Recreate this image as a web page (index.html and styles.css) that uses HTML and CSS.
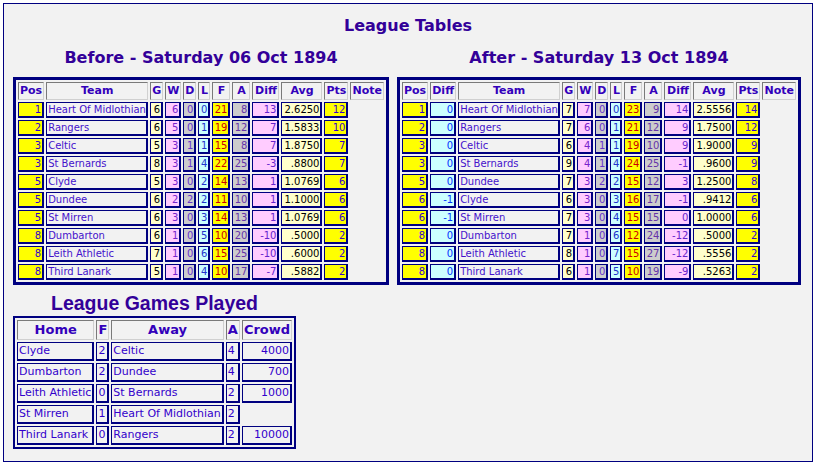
FILE: index.html
```html
<!DOCTYPE html>
<html>
<head>
<meta charset="utf-8">
<title>League Tables</title>
<link rel="stylesheet" href="styles.css">
</head>
<body>
<div class="page">
  <div class="title">League Tables</div>
  <div class="tables">
    <div class="col">
      <div class="subtitle">Before - Saturday 06 Oct 1894</div>
      <table class="league">
        <tr>
          <th class="w-pos">Pos</th><th class="w-team">Team</th><th class="w-g">G</th><th class="w-w">W</th><th class="w-d">D</th><th class="w-l">L</th><th class="w-f">F</th><th class="w-a">A</th><th class="w-diff">Diff</th><th class="w-avg">Avg</th><th class="w-pts">Pts</th><th class="w-note">Note</th>
        </tr>
        <tr><td class="pos">1</td><td class="team">Heart Of Midlothian</td><td class="g">6</td><td class="w">6</td><td class="d">0</td><td class="l">0</td><td class="f">21</td><td class="a">8</td><td class="diff">13</td><td class="avg">2.6250</td><td class="pts">12</td><td class="note"></td></tr>
        <tr><td class="pos">2</td><td class="team">Rangers</td><td class="g">6</td><td class="w">5</td><td class="d">0</td><td class="l">1</td><td class="f">19</td><td class="a">12</td><td class="diff">7</td><td class="avg">1.5833</td><td class="pts">10</td><td class="note"></td></tr>
        <tr><td class="pos">3</td><td class="team">Celtic</td><td class="g">5</td><td class="w">3</td><td class="d">1</td><td class="l">1</td><td class="f">15</td><td class="a">8</td><td class="diff">7</td><td class="avg">1.8750</td><td class="pts">7</td><td class="note"></td></tr>
        <tr><td class="pos">3</td><td class="team">St Bernards</td><td class="g">8</td><td class="w">3</td><td class="d">1</td><td class="l">4</td><td class="f">22</td><td class="a">25</td><td class="diff">-3</td><td class="avg">.8800</td><td class="pts">7</td><td class="note"></td></tr>
        <tr><td class="pos">5</td><td class="team">Clyde</td><td class="g">5</td><td class="w">3</td><td class="d">0</td><td class="l">2</td><td class="f">14</td><td class="a">13</td><td class="diff">1</td><td class="avg">1.0769</td><td class="pts">6</td><td class="note"></td></tr>
        <tr><td class="pos">5</td><td class="team">Dundee</td><td class="g">6</td><td class="w">2</td><td class="d">2</td><td class="l">2</td><td class="f">11</td><td class="a">10</td><td class="diff">1</td><td class="avg">1.1000</td><td class="pts">6</td><td class="note"></td></tr>
        <tr><td class="pos">5</td><td class="team">St Mirren</td><td class="g">6</td><td class="w">3</td><td class="d">0</td><td class="l">3</td><td class="f">14</td><td class="a">13</td><td class="diff">1</td><td class="avg">1.0769</td><td class="pts">6</td><td class="note"></td></tr>
        <tr><td class="pos">8</td><td class="team">Dumbarton</td><td class="g">6</td><td class="w">1</td><td class="d">0</td><td class="l">5</td><td class="f">10</td><td class="a">20</td><td class="diff">-10</td><td class="avg">.5000</td><td class="pts">2</td><td class="note"></td></tr>
        <tr><td class="pos">8</td><td class="team">Leith Athletic</td><td class="g">7</td><td class="w">1</td><td class="d">0</td><td class="l">6</td><td class="f">15</td><td class="a">25</td><td class="diff">-10</td><td class="avg">.6000</td><td class="pts">2</td><td class="note"></td></tr>
        <tr><td class="pos">8</td><td class="team">Third Lanark</td><td class="g">5</td><td class="w">1</td><td class="d">0</td><td class="l">4</td><td class="f">10</td><td class="a">17</td><td class="diff">-7</td><td class="avg">.5882</td><td class="pts">2</td><td class="note"></td></tr>
      </table>
    </div>
    <div class="col">
      <div class="subtitle">After - Saturday 13 Oct 1894</div>
      <table class="league">
        <tr>
          <th class="w-pos">Pos</th><th class="w-pdiff">Diff</th><th class="w-team">Team</th><th class="w-g">G</th><th class="w-w">W</th><th class="w-d">D</th><th class="w-l">L</th><th class="w-f">F</th><th class="w-a">A</th><th class="w-diff">Diff</th><th class="w-avg">Avg</th><th class="w-pts">Pts</th><th class="w-note">Note</th>
        </tr>
        <tr><td class="pos">1</td><td class="pdiff">0</td><td class="team">Heart Of Midlothian</td><td class="g">7</td><td class="w">7</td><td class="d">0</td><td class="l">0</td><td class="f">23</td><td class="a">9</td><td class="diff">14</td><td class="avg">2.5556</td><td class="pts">14</td><td class="note"></td></tr>
        <tr><td class="pos">2</td><td class="pdiff">0</td><td class="team">Rangers</td><td class="g">7</td><td class="w">6</td><td class="d">0</td><td class="l">1</td><td class="f">21</td><td class="a">12</td><td class="diff">9</td><td class="avg">1.7500</td><td class="pts">12</td><td class="note"></td></tr>
        <tr><td class="pos">3</td><td class="pdiff">0</td><td class="team">Celtic</td><td class="g">6</td><td class="w">4</td><td class="d">1</td><td class="l">1</td><td class="f">19</td><td class="a">10</td><td class="diff">9</td><td class="avg">1.9000</td><td class="pts">9</td><td class="note"></td></tr>
        <tr><td class="pos">3</td><td class="pdiff">0</td><td class="team">St Bernards</td><td class="g">9</td><td class="w">4</td><td class="d">1</td><td class="l">4</td><td class="f">24</td><td class="a">25</td><td class="diff">-1</td><td class="avg">.9600</td><td class="pts">9</td><td class="note"></td></tr>
        <tr><td class="pos">5</td><td class="pdiff">0</td><td class="team">Dundee</td><td class="g">7</td><td class="w">3</td><td class="d">2</td><td class="l">2</td><td class="f">15</td><td class="a">12</td><td class="diff">3</td><td class="avg">1.2500</td><td class="pts">8</td><td class="note"></td></tr>
        <tr><td class="pos">6</td><td class="pdiff">-1</td><td class="team">Clyde</td><td class="g">6</td><td class="w">3</td><td class="d">0</td><td class="l">3</td><td class="f">16</td><td class="a">17</td><td class="diff">-1</td><td class="avg">.9412</td><td class="pts">6</td><td class="note"></td></tr>
        <tr><td class="pos">6</td><td class="pdiff">-1</td><td class="team">St Mirren</td><td class="g">7</td><td class="w">3</td><td class="d">0</td><td class="l">4</td><td class="f">15</td><td class="a">15</td><td class="diff">0</td><td class="avg">1.0000</td><td class="pts">6</td><td class="note"></td></tr>
        <tr><td class="pos">8</td><td class="pdiff">0</td><td class="team">Dumbarton</td><td class="g">7</td><td class="w">1</td><td class="d">0</td><td class="l">6</td><td class="f">12</td><td class="a">24</td><td class="diff">-12</td><td class="avg">.5000</td><td class="pts">2</td><td class="note"></td></tr>
        <tr><td class="pos">8</td><td class="pdiff">0</td><td class="team">Leith Athletic</td><td class="g">8</td><td class="w">1</td><td class="d">0</td><td class="l">7</td><td class="f">15</td><td class="a">27</td><td class="diff">-12</td><td class="avg">.5556</td><td class="pts">2</td><td class="note"></td></tr>
        <tr><td class="pos">8</td><td class="pdiff">0</td><td class="team">Third Lanark</td><td class="g">6</td><td class="w">1</td><td class="d">0</td><td class="l">5</td><td class="f">10</td><td class="a">19</td><td class="diff">-9</td><td class="avg">.5263</td><td class="pts">2</td><td class="note"></td></tr>
      </table>
    </div>
  </div>
  <div class="games">
    <div class="games-title">League Games Played</div>
    <table class="played">
      <tr><th class="w-home">Home</th><th class="w-sc">F</th><th class="w-away">Away</th><th class="w-sc2">A</th><th class="w-crowd">Crowd</th></tr>
      <tr><td class="name">Clyde</td><td class="sc">2</td><td class="name">Celtic</td><td class="sc">4</td><td class="crowd">4000</td></tr>
      <tr><td class="name">Dumbarton</td><td class="sc">2</td><td class="name">Dundee</td><td class="sc">4</td><td class="crowd">700</td></tr>
      <tr><td class="name">Leith Athletic</td><td class="sc">0</td><td class="name">St Bernards</td><td class="sc">2</td><td class="crowd">1000</td></tr>
      <tr><td class="name">St Mirren</td><td class="sc">1</td><td class="name">Heart Of Midlothian</td><td class="sc">2</td><td class="crowd"></td></tr>
      <tr><td class="name">Third Lanark</td><td class="sc">0</td><td class="name">Rangers</td><td class="sc">2</td><td class="crowd">10000</td></tr>
    </table>
  </div>
</div>
</body>
</html>
```

FILE: styles.css
```css
html, body {
  margin: 0;
  padding: 0;
  background: #ffffff;
}

body {
  font-family: "DejaVu Sans", Verdana, sans-serif;
}

.page {
  margin: 3px;
  width: 808px;
  height: 457px;
  border: 1px solid #000080;
  background: #f2f2f2;
  box-sizing: content-box;
}

.title {
  margin-top: 12px;
  text-align: center;
  font-weight: bold;
  font-size: 16px;
  line-height: 19px;
  color: #330099;
}

.tables {
  display: flex;
  align-items: flex-start;
  gap: 8px;
  padding-left: 9px;
  margin-top: 13px;
}

.col {
  display: flex;
  flex-direction: column;
  align-items: center;
}

.subtitle {
  font-weight: bold;
  font-size: 16px;
  line-height: 19px;
  color: #330099;
  margin-bottom: 10px;
}

table {
  border-collapse: separate;
  border-spacing: 2px;
  empty-cells: hide;
}

th, td {
  box-sizing: border-box;
  padding: 0 1px;
  white-space: nowrap;
}

th {
  border-style: solid;
  border-width: 1px;
  border-color: #7a7a7a #d0d0d0 #d0d0d0 #7a7a7a;
  color: #3300bb;
  font-weight: bold;
  text-align: center;
}

td {
  border-style: solid;
  border-color: #000080;
  border-width: 1px 2px 2px 1px;
}

/* league tables */
.league {
  border: 3px solid #000080;
}

.league th {
  font-size: 11px;
  line-height: 16px;
  height: 18px;
}

.league td {
  font-size: 10px;
  line-height: 13px;
  height: 16px;
  text-align: right;
  color: #3300cc;
}

.w-pos { width: 26px; }
.w-pdiff { width: 26px; }
.w-team { width: 102px; }
.w-g { width: 13px; }
.w-w { width: 16px; }
.w-d { width: 13px; }
.w-l { width: 12px; }
.w-f { width: 18px; }
.w-a { width: 18px; }
.w-diff { width: 27px; }
.w-avg { width: 41px; }
.w-pts { width: 24px; }
.w-note { width: 32px; }

.league td.pos { background: #ffff00; color: #3300cc; }
.league td.pdiff { background: #ccffff; color: #0033ff; }
.league td.team { background: #f2f2f2; text-align: left; padding: 0 0 0 1px; color: #4411cc; }
.league td.g { background: #ffffcc; color: #000000; }
.league td.w { background: #ffccff; color: #7722cc; }
.league td.d { background: #cccccc; color: #6633cc; }
.league td.l { background: #ccffff; color: #2233cc; }
.league td.f { background: #ffff00; color: #cc0000; }
.league td.a { background: #cccccc; color: #6633aa; }
.league td.diff { background: #ffccff; color: #6622cc; }
.league td.avg { background: #ffffcc; color: #000000; }
.league td.pts { background: #ffff00; color: #3300cc; }

/* games played */
.games {
  margin-top: 7px;
  padding-left: 9px;
  display: inline-flex;
  flex-direction: column;
  align-items: center;
}

.games-title {
  font-family: "Liberation Sans", Arial, sans-serif;
  font-weight: bold;
  font-size: 19.5px;
  line-height: 22px;
  color: #330099;
  margin-bottom: 2px;
}

.played {
  border: 2px solid #000080;
}

.played th {
  font-size: 13px;
  line-height: 16px;
  height: 20px;
}

.played td {
  font-size: 11px;
  line-height: 16px;
  height: 19px;
  color: #3300cc;
  background: #f2f2f2;
  text-align: left;
}

.played td.name { padding-left: 1px; }
.played td.crowd { text-align: right; }

.w-home { width: 76px; }
.w-sc { width: 12px; }
.w-away { width: 112px; }
.w-sc2 { width: 14px; }
.w-crowd { width: 50px; }
```
